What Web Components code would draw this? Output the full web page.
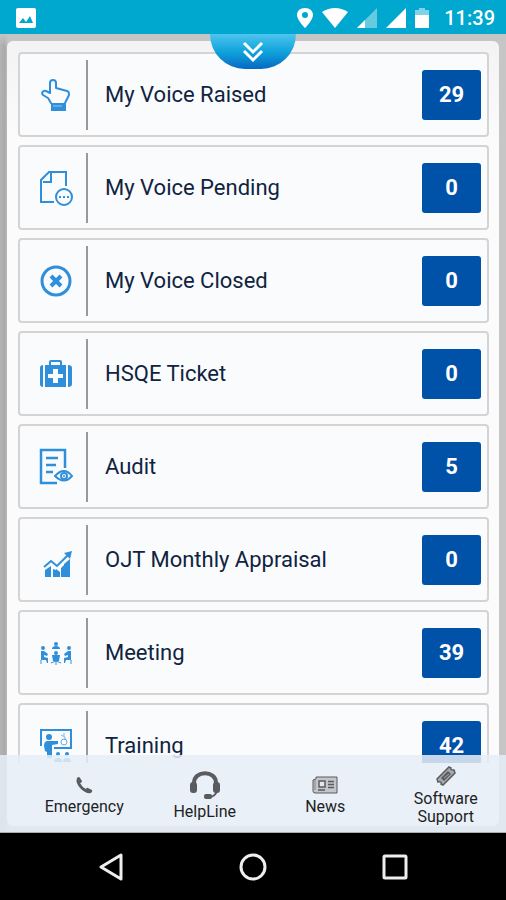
<!DOCTYPE html>
<html lang="en">
<head>
<meta charset="utf-8">
<meta name="viewport" content="width=device-width, initial-scale=1">
<title>My Voice</title>
<style>
  body {
    margin: 0;
    font-family: Roboto, "Liberation Sans", sans-serif;
  }
</style>
</head>
<body>
<voice-app></voice-app>

<script>
/**
 * Icons. Each entry is [width, height, markup]; colours come from currentColor.
 */
const ICONS = {
  hand: [32, 34, `<g fill="none" stroke="currentColor" stroke-width="2" stroke-linejoin="round" stroke-linecap="round">
    <path d="M11 25 8 20 3 17C1 15 3 12 6 13L10 15V5C10 1 16 1 16 5V10L27 13C29 13 29 15 29 17L25 25"/></g>
    <path d="M11 25H26V33H11Z" fill="currentColor"/><path d="M13 28H22" stroke="#9bc8ee"/>`],
  pending: [34, 38, `<g fill="none" stroke="currentColor" stroke-width="2">
    <path d="M15 33H2V11L10 3H27V17M12 4V13H4"/><circle cx="25" cy="28" r="8"/></g>
    <path d="M20 27h2v2h-2zM24 27h2v2h-2zM28 27h2v2h-2z" fill="currentColor"/>`],
  closed: [32, 32, `<circle cx="16" cy="16" r="14" fill="none" stroke="currentColor" stroke-width="3"/>
    <path d="M11 11 21 21M21 11 11 21" stroke="currentColor" stroke-width="4"/>`],
  firstaid: [34, 30, `<path d="M11 6V3Q11 2 12 2H21Q22 2 22 3V6" fill="none" stroke="currentColor" stroke-width="2"/>
    <path d="M4 6V28Q1 28 1 25V9Q1 6 4 6ZM6 6H27V28H6ZM29 6Q33 6 33 9V25Q33 28 29 28Z" fill="currentColor"/>
    <path d="M14 10H19V15H24V19H19V24H14V19H9V15H14Z" fill="#fafbfd"/>`],
  audit: [34, 38, `<g fill="none" stroke="currentColor" stroke-width="2.5">
    <path d="M18 35H2V2H26V20M7 10H19M7 17H17M7 24H14"/></g>
    <g fill="none" stroke="currentColor" stroke-width="2"><path d="M16 28Q25 18 33 28Q25 37 16 28Z"/><circle cx="25" cy="28" r="3"/></g>
    <circle cx="25" cy="28" r="1" fill="currentColor"/>`],
  chart: [34, 38, `<path d="M6 29 12 25V36H6ZM14 28 20 30V36H14ZM17 28 21 31V36H17ZM22 27 25 24V36H22ZM25 23 31 18V36H25Z" fill="currentColor"/>
    <path d="M5 26 12 20 18 25 29 14" fill="none" stroke="currentColor" stroke-width="2"/>
    <path d="M25 12 33 10 31 18Z" fill="currentColor"/>`],
  meeting: [34, 26, `<g fill="currentColor">
    <circle cx="17" cy="4" r="2"/><path d="M13 9Q13 6 17 6Q21 6 21 9Z"/>
    <circle cx="17" cy="13" r="2"/><path d="M13 15H21L20 21H14Z"/>
    <circle cx="4" cy="8" r="2"/><circle cx="30" cy="8" r="2"/>
    <path d="M2 11H5L9 14 8 16 5 15V17L9 18V23H8L7 20H2ZM32 11H29L25 14 26 16 29 15V17L25 18V23H26L27 20H32Z"/></g>
    <path d="M2 20V24M32 20V24M17 20V25M12 23 17 21 22 23" stroke="currentColor" fill="none"/>`],
  training: [34, 36, `<path d="M2 18V2H32V20H15" fill="none" stroke="currentColor" stroke-width="2"/>
    <g fill="currentColor"><circle cx="10" cy="9" r="3"/>
    <path d="M5 18Q5 13 9 13H14L19 13V16L13 17V30H8V24L6 23Z"/>
    <circle cx="19" cy="26" r="2"/><circle cx="28" cy="26" r="2"/>
    <path d="M15 34Q15 30 19 30Q23 30 23 34ZM24 34Q24 30 28 30Q32 30 32 34Z"/></g>
    <path d="M22 7 26 9V12M25 5V8" stroke="currentColor" fill="none" opacity=".6"/>
    <circle cx="25" cy="14" r="3" fill="none" stroke="currentColor" opacity=".7"/>`],
  phone: [18, 18, `<path d="M2 2Q4 0 5 2L7 5Q7 7 5 7Q7 11 11 13Q12 11 13 12L17 14Q18 15 16 17Q11 18 6 13Q0 7 2 2Z" fill="currentColor"/>`],
  headset: [30, 28, `<path d="M4 12C4 -1 26 -1 26 12" fill="none" stroke="currentColor" stroke-width="4"/>
    <rect x="0" y="11" width="7" height="11" rx="3" fill="currentColor"/><rect x="23" y="11" width="7" height="11" rx="3" fill="currentColor"/>
    <path d="M27 20Q25 26 19 26" fill="none" stroke="currentColor" stroke-width="2"/>
    <rect x="14" y="23" width="8" height="5" rx="2" fill="currentColor"/>`],
  news: [26, 18, `<path d="M4 1H25V17H3Q1 17 1 15V4L4 3Z" fill="#c3c6ca" stroke="currentColor"/>
    <path d="M3 4V14" stroke="currentColor" opacity=".6"/>
    <rect x="7" y="5" width="6" height="6" fill="#e4e8ee" stroke="currentColor" stroke-width="1.5"/>
    <path d="M16 5.5H22M16 8.5H22M16 11.5H22M6 14H13" stroke="currentColor" stroke-width="1.5"/>`],
  ticket: [20, 20, `<path d="M1 13 13 1 15 2Q14 4 18 4L19 7 7 19 5 18Q6 15 2 16Z" fill="#a7a9ad" stroke="currentColor" stroke-width="1.5"/>
    <path d="M5 12 12 5 15 8 8 15Z" fill="currentColor"/><path d="M8 12 13 8" stroke="#a7a9ad"/>`],
  chevrons: [22, 22, `<path d="M2 2 11 11 20 2M2 10 11 19 20 10" fill="none" stroke="currentColor" stroke-width="3"/>`],
  image: [20, 20, `<rect width="20" height="20" rx="2" fill="currentColor"/><path d="M3 15 7 10 10 14 14 8 17 15Z" fill="#00a7ce"/>`],
  pin: [16, 20, `<path fill-rule="evenodd" d="M8 0C3 0 0 3 0 7C0 12 8 20 8 20S16 12 16 7C16 3 13 0 8 0ZM8 4A3 3 0 1 1 8 10A3 3 0 1 1 8 4Z" fill="currentColor"/>`],
  wifi: [26, 20, `<path d="M0 4Q13-4 26 4L13 20Z" fill="currentColor"/>`],
  weak: [20, 20, `<path d="M20 0V20H0Z" fill="currentColor" opacity=".4"/><path d="M8 12V20H0Z" fill="currentColor"/>`],
  signal: [20, 20, `<path d="M20 0V20H0Z" fill="currentColor"/>`],
  battery: [14, 20, `<path d="M4 0H10V2H14V7H0V2H4Z" fill="currentColor" opacity=".5"/><path d="M0 7H14V20H0Z" fill="currentColor"/>`],
  back: [26, 28, `<path d="M23 2V26L3 14Z" fill="none" stroke="currentColor" stroke-width="3" stroke-linejoin="round"/>`],
  home: [28, 28, `<circle cx="14" cy="14" r="12" fill="none" stroke="currentColor" stroke-width="3"/>`],
  recent: [26, 26, `<rect x="2" y="2" width="22" height="22" rx="1" fill="none" stroke="currentColor" stroke-width="3"/>`],
};

/* Small base class: subclasses supply styles() and template() */
class BaseElement extends HTMLElement {
  constructor() {
    super();
    this.attachShadow({ mode: 'open' });
  }

  connectedCallback() {
    this.shadowRoot.innerHTML = `
      <style>${this.styles()}</style>
      ${this.template()}
    `;
  }
}

/** <app-icon name="hand"> draws one entry of ICONS */
class AppIcon extends BaseElement {
  styles() {
    return `
      :host { display: inline-flex; flex: none; }
      svg { display: block; }
    `;
  }

  template() {
    const [w, h, body] = ICONS[this.getAttribute('name')];
    return `<svg width="${w}" height="${h}" viewBox="0 0 ${w} ${h}" aria-hidden="true">${body}</svg>`;
  }
}

class StatusBar extends BaseElement {
  styles() {
    return `
      :host {
        display: flex;
        flex: none;
        align-items: center;
        gap: 9px;
        height: 34px;
        padding: 2px 11px 0 16px;
        box-sizing: border-box;
        background: #00a7ce;
        color: #fff;
      }
      .spacer { flex: 1; }
      time { font-size: 20px; font-weight: 500; line-height: 32px; margin-left: 6px; }
    `;
  }

  template() {
    return `
      <app-icon name="image"></app-icon>
      <span class="spacer"></span>
      <app-icon name="pin"></app-icon>
      <app-icon name="wifi"></app-icon>
      <app-icon name="weak"></app-icon>
      <app-icon name="signal"></app-icon>
      <app-icon name="battery"></app-icon>
      <time>11:39</time>
    `;
  }
}

/** <count-card icon="hand" count="29">Label</count-card> */
class CountCard extends BaseElement {
  styles() {
    return `
      :host { display: block; flex: none; }
      button {
        display: flex;
        align-items: center;
        width: 100%;
        height: 85px;
        padding: 0 6px 0 0;
        box-sizing: border-box;
        border: 2px solid #d4d4d5;
        border-radius: 4px;
        background: #fafbfd;
        color: #10233f;
        font: 400 22px/28px Roboto, "Liberation Sans", sans-serif;
        text-align: left;
      }
      .icon {
        display: flex;
        justify-content: center;
        align-items: center;
        width: 68px;
        height: 70px;
        padding-left: 6px;
        box-sizing: border-box;
        border-right: 2px solid #999;
        color: #2f8fda;
      }
      .label { flex: 1; padding-left: 17px; }
      .count {
        width: 59px;
        border-radius: 3px;
        background: #0052a8;
        color: #fff;
        font-weight: 700;
        line-height: 50px;
        text-align: center;
      }
    `;
  }

  template() {
    return `
      <button type="button">
        <span class="icon"><app-icon name="${this.getAttribute('icon')}"></app-icon></span>
        <span class="label"><slot></slot></span>
        <span class="count">${this.getAttribute('count')}</span>
      </button>
    `;
  }
}

/** <tab-item icon="phone">Label</tab-item> */
class TabItem extends BaseElement {
  styles() {
    return `
      :host { display: flex; flex: 1; }
      a {
        flex: 1;
        display: flex;
        flex-direction: column;
        align-items: center;
        justify-content: center;
        gap: 4px;
        color: #1d1f24;
        font-size: 16px;
        line-height: 18px;
        text-align: center;
        text-decoration: none;
      }
      app-icon { color: #5a5b5e; }
      .label { max-width: 90px; }
    `;
  }

  template() {
    return `
      <a href="#">
        <app-icon name="${this.getAttribute('icon')}"></app-icon>
        <span class="label"><slot></slot></span>
      </a>
    `;
  }
}

class SystemNav extends BaseElement {
  styles() {
    return `
      :host {
        display: flex;
        flex: none;
        justify-content: center;
        align-items: center;
        height: 67px;
        background: #000;
      }
      button {
        display: flex;
        justify-content: center;
        width: 28%;
        padding: 0;
        border: 0;
        background: none;
        color: #eee;
      }
    `;
  }

  template() {
    return `
      <button type="button" aria-label="Back"><app-icon name="back"></app-icon></button>
      <button type="button" aria-label="Home"><app-icon name="home"></app-icon></button>
      <button type="button" aria-label="Recent apps"><app-icon name="recent"></app-icon></button>
    `;
  }
}

class VoiceApp extends BaseElement {
  styles() {
    return `
      :host {
        display: flex;
        flex-direction: column;
        height: 100vh;
      }
      main {
        position: relative;
        flex: 1;
        display: flex;
        min-height: 0;
        padding: 7px;
        background: linear-gradient(#c4c4c4, transparent 12px), linear-gradient(90deg, #b4b4b4, #a9a9a9 5px, #c6c6c6 8px, #c6c6c6);
      }
      .panel {
        flex: 1;
        display: flex;
        min-width: 0;
        padding: 11px 10px 63px 11px;
        border-radius: 6px;
        background: linear-gradient(#f3f3f3, #fbfbfc 100px);
      }
      .list {
        flex: 1;
        display: flex;
        flex-direction: column;
        gap: 8px;
        overflow: hidden;
      }
      /* pull-down handle, hangs over the list */
      .handle {
        position: absolute;
        top: 0;
        left: 50%;
        transform: translateX(-50%);
        display: flex;
        justify-content: center;
        align-items: center;
        width: 86px;
        height: 35px;
        padding: 0;
        border: 0;
        border-radius: 0 0 40px 40px;
        background: linear-gradient(#4fc4ef, #10a4dc 50%, #0668c4);
        color: #fff;
      }
      .tabs {
        position: absolute;
        left: 0;
        right: 0;
        bottom: 0;
        display: flex;
        height: 78px;
        padding: 5px 0 0 24px;
        box-sizing: border-box;
        border-bottom: 1px solid #a9adb3;
        background: rgba(230, 237, 247, .86);
      }
    `;
  }

  template() {
    return `
      <status-bar></status-bar>
      <main>
        <div class="panel">
          <div class="list">
            <count-card icon="hand" count="29">My Voice Raised</count-card>
            <count-card icon="pending" count="0">My Voice Pending</count-card>
            <count-card icon="closed" count="0">My Voice Closed</count-card>
            <count-card icon="firstaid" count="0">HSQE Ticket</count-card>
            <count-card icon="audit" count="5">Audit</count-card>
            <count-card icon="chart" count="0">OJT Monthly Appraisal</count-card>
            <count-card icon="meeting" count="39">Meeting</count-card>
            <count-card icon="training" count="42">Training</count-card>
          </div>
        </div>
        <button class="handle" type="button" aria-label="Expand"><app-icon name="chevrons"></app-icon></button>
        <nav class="tabs">
          <tab-item icon="phone">Emergency</tab-item>
          <tab-item icon="headset">HelpLine</tab-item>
          <tab-item icon="news">News</tab-item>
          <tab-item icon="ticket">Software Support</tab-item>
        </nav>
      </main>
      <system-nav></system-nav>
    `;
  }
}

customElements.define('app-icon', AppIcon);
customElements.define('status-bar', StatusBar);
customElements.define('count-card', CountCard);
customElements.define('tab-item', TabItem);
customElements.define('system-nav', SystemNav);
customElements.define('voice-app', VoiceApp);
</script>
</body>
</html>
